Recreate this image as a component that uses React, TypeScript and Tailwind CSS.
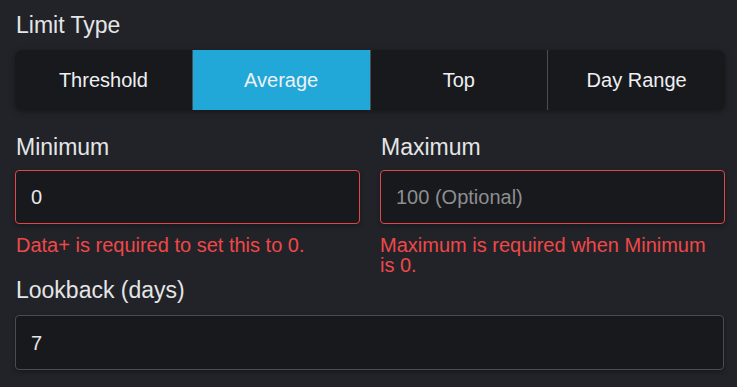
import React from "react";

const segments = ["Threshold", "Average", "Top", "Day Range"];

export default function App() {
  return (
    <div
      className="w-[737px] h-[387px] bg-[#212328] pl-[15px] pr-[12px] pt-3 overflow-hidden"
      style={{ fontFamily: '"Liberation Sans", Arial, sans-serif' }}
    >
      <div className="text-[23px] leading-[26px] text-[#e4e5e7] pl-px">Limit Type</div>

      <div className="mt-3 flex h-[60px] rounded-lg bg-[#18191d] overflow-hidden shadow-[0_2px_6px_rgba(0,0,0,0.35)]">
        {segments.map((s, i) => (
          <div
            key={s}
            className={
              "flex-1 flex items-center justify-center text-[20px] text-[#eef0f3] " +
              (i === 1 ? "bg-[#21a8d9] " : "") +
              (i > 0 ? "border-l border-[#4a4e54]" : "")
            }
          >
            {s}
          </div>
        ))}
      </div>

      <div className="mt-6 grid grid-cols-2 gap-x-5">
        <div className="flex flex-col">
          <div className="text-[23px] leading-[26px] text-[#e4e5e7] pl-px">Minimum</div>
          <div className="mt-[10px] h-[54px] rounded border border-[#e0474b] bg-[#18191c] flex items-center pl-[15px] text-[20px] text-[#e6e7ea] shadow-[0_2px_5px_rgba(0,0,0,0.3)]">
            0
          </div>
          <div className="mt-[11px] text-[20px] leading-[20px] text-[#f04848] pl-px">
            Data+ is required to set this to 0.
          </div>
        </div>
        <div className="flex flex-col">
          <div className="text-[23px] leading-[26px] text-[#e4e5e7] pl-px">Maximum</div>
          <div className="mt-[10px] h-[54px] rounded border border-[#e0474b] bg-[#18191c] flex items-center pl-[15px] text-[20px] text-[#8d8e92] shadow-[0_2px_5px_rgba(0,0,0,0.3)]">
            100 (Optional)
          </div>
          <div className="mt-[11px] text-[20px] leading-[20px] text-[#f04848] pr-4">
            Maximum is required when Minimum is 0.
          </div>
        </div>
      </div>

      <div className="mt-[2px] text-[23px] leading-[26px] text-[#e4e5e7] pl-px">Lookback (days)</div>
      <div className="mt-3 h-[55px] w-[709px] rounded border border-[#4b4c51] bg-[#18191c] flex items-center pl-[15px] text-[20px] text-[#e6e7ea] shadow-[0_2px_5px_rgba(0,0,0,0.3)]">
        7
      </div>
    </div>
  );
}
